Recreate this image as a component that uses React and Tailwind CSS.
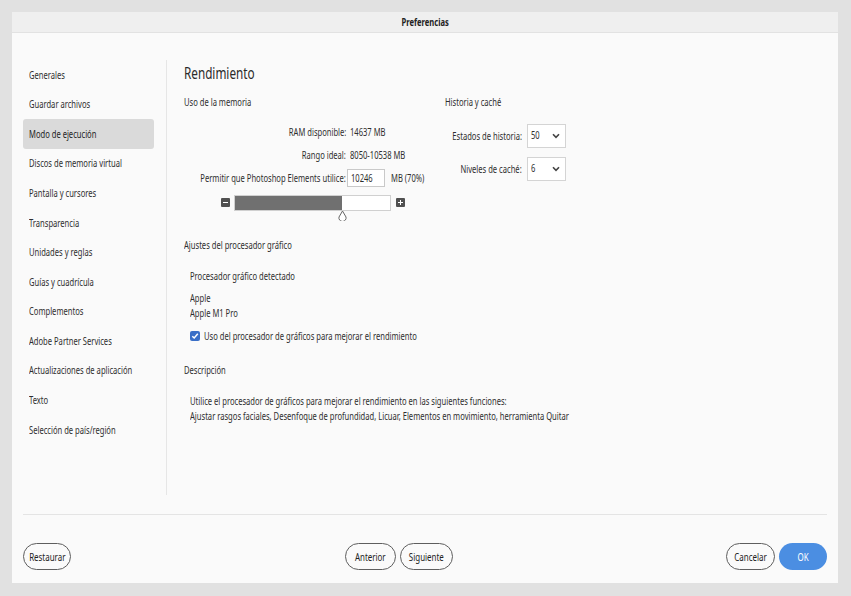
import React from "react";

const F = { fontFamily: '"Noto Sans", "Liberation Sans", sans-serif' };

function T({ children, o = "l", className = "" }) {
  const origin = o === "r" ? "origin-right" : o === "c" ? "origin-center" : "origin-left";
  return (
    <span className={"inline-block shrink-0 whitespace-nowrap scale-x-[0.69] " + origin + " " + className}>
      {children}
    </span>
  );
}

const side = [
  "Generales",
  "Guardar archivos",
  "Modo de ejecución",
  "Discos de memoria virtual",
  "Pantalla y cursores",
  "Transparencia",
  "Unidades y reglas",
  "Guías y cuadrícula",
  "Complementos",
  "Adobe Partner Services",
  "Actualizaciones de aplicación",
  "Texto",
  "Selección de país/región",
];

function Btn({ children, w, primary }) {
  return (
    <div
      className={
        "h-[27px] rounded-full flex items-center justify-center text-[11.5px] " +
        (primary
          ? "bg-[#4b8ee2] text-white"
          : "border-[1.5px] border-[#5e5e5e] text-[#222] bg-[#fafafa]")
      }
      style={{ width: w }}
    >
      <T o="c">{children}</T>
    </div>
  );
}

function Sel({ v }) {
  return (
    <div className="w-[39px] h-[24px] border border-[#d4d4d4] bg-white flex items-start justify-between pl-[3px] pr-[5px] pt-[2px] text-[11px]">
      <T>{v}</T>
      <svg width="8" height="6" viewBox="0 0 8 6" className="mt-[6px]">
        <path d="M1 1.2 L4 4.3 L7 1.2" stroke="#444" strokeWidth="1.6" fill="none" />
      </svg>
    </div>
  );
}

function Label({ w, children }) {
  return (
    <div className="flex justify-end" style={{ width: w }}>
      <T o="r">{children}</T>
    </div>
  );
}

export default function App() {
  return (
    <div
      className="w-[851px] h-[596px] bg-[#e1e1e1] pt-[12px] px-[12px] pb-[13px] text-[#2e2e2e]"
      style={F}
    >
      <div className="w-[826px] h-[571px] bg-[#fafafa] flex flex-col overflow-hidden">
        <div className="h-[21px] shrink-0 bg-[#efefef] border-b border-[#e2e2e2] flex items-center justify-center text-[11px] font-bold text-[#222]">
          <T o="c">Preferencias</T>
        </div>
        <div className="flex h-[481px] shrink-0">
          <div className="w-[143px] ml-[11px] pt-[27px] flex flex-col">
            {side.map((s, i) => (
              <div
                key={s}
                className={
                  "h-[29.6px] shrink-0 flex items-center pl-[6px] text-[11px] rounded-[3px] w-[131px] " +
                  (i === 2 ? "bg-[#dadada] text-[#222]" : "text-[#2e2e2e]")
                }
              >
                <T>{s}</T>
              </div>
            ))}
          </div>
          <div className="w-px h-[435px] mt-[27px] bg-[#e6e6e6] shrink-0" />
          <div className="flex-1 pl-[17px] pt-[29px] text-[11px]">
            <div className="text-[17px] leading-[22px] text-[#2a2a2a]">
              <T>Rendimiento</T>
            </div>
            <div className="flex mt-[11px]">
              <div className="w-[261px]">
                <div className="leading-[14px]">
                  <T>Uso de la memoria</T>
                </div>
                <div className="mt-[11px] grid grid-cols-[162px_1fr] items-center gap-x-[4px]">
                  <div className="flex justify-end h-[23px] leading-[23px]">
                    <T o="r">RAM disponible:</T>
                  </div>
                  <div className="h-[23px] leading-[23px]">
                    <T>14637 MB</T>
                  </div>
                  <div className="flex justify-end h-[23px] leading-[23px]">
                    <T o="r">Rango ideal:</T>
                  </div>
                  <div className="h-[23px] leading-[23px]">
                    <T>8050-10538 MB</T>
                  </div>
                  <div className="flex justify-end h-[24px] leading-[24px]">
                    <T o="r">Permitir que Photoshop Elements utilice:</T>
                  </div>
                  <div className="flex items-center whitespace-nowrap ml-[-3px]">
                    <div className="w-[38px] h-[18px] border border-[#c9c9c9] bg-white leading-[16px] pl-[3px]">
                      <T>10246</T>
                    </div>
                    <div className="ml-[6px]">
                      <T>MB (70%)</T>
                    </div>
                  </div>
                </div>
                <div className="flex items-start ml-[37px] mt-[5px]">
                  <div className="w-[9px] h-[9px] bg-[#505050] rounded-[1px] flex items-center justify-center mt-[3px]">
                    <div className="w-[5px] h-[1.5px] bg-white" />
                  </div>
                  <div className="relative ml-[4px] w-[157px] h-[16px] border border-[#d0d0d0] bg-white">
                    <div className="h-full w-[107px] bg-[#707070]" />
                    <svg
                      width="9"
                      height="11"
                      viewBox="0 0 9 11"
                      className="absolute left-[103px] top-[14px]"
                    >
                      <path d="M4.5 1 L8 7 A3.6 3.6 0 1 1 1 7 Z" fill="#fff" stroke="#666" strokeWidth="1" />
                    </svg>
                  </div>
                  <div className="w-[9px] h-[9px] bg-[#505050] rounded-[1px] flex items-center justify-center mt-[3px] ml-[5px] relative">
                    <div className="w-[5px] h-[1.5px] bg-white" />
                    <div className="absolute w-[1.5px] h-[5px] bg-white" />
                  </div>
                </div>
              </div>
              <div>
                <div className="leading-[14px]">
                  <T>Historia y caché</T>
                </div>
                <div className="mt-[15px] flex flex-col gap-[9px]">
                  <div className="flex items-center">
                    <Label w="77px">Estados de historia:</Label>
                    <div className="ml-[5px]">
                      <Sel v="50" />
                    </div>
                  </div>
                  <div className="flex items-center">
                    <Label w="77px">Niveles de caché:</Label>
                    <div className="ml-[5px]">
                      <Sel v="6" />
                    </div>
                  </div>
                </div>
              </div>
            </div>
            <div className="mt-[27px] leading-[14px]">
              <T>Ajustes del procesador gráfico</T>
            </div>
            <div className="pl-[6px]">
              <div className="mt-[17px] leading-[14px]">
                <T>Procesador gráfico detectado</T>
              </div>
              <div className="mt-[7px] leading-[15px]">
                <T>Apple</T>
              </div>
              <div className="leading-[15px]">
                <T>Apple M1 Pro</T>
              </div>
              <div className="mt-[8px] flex items-center">
                <div className="w-[10px] h-[10px] shrink-0 rounded-[2px] bg-[#3a6fc7] flex items-center justify-center">
                  <svg width="8" height="8" viewBox="0 0 8 8">
                    <path d="M1.3 4.2 L3.2 6 L6.8 1.8" stroke="#fff" strokeWidth="1.5" fill="none" />
                  </svg>
                </div>
                <div className="ml-[4px]">
                  <T>Uso del procesador de gráficos para mejorar el rendimiento</T>
                </div>
              </div>
            </div>
            <div className="mt-[18px] leading-[14px]">
              <T>Descripción</T>
            </div>
            <div className="pl-[6px] mt-[16px] leading-[15.5px]">
              <div>
                <T>Utilice el procesador de gráficos para mejorar el rendimiento en las siguientes funciones:</T>
              </div>
              <div>
                <T>Ajustar rasgos faciales, Desenfoque de profundidad, Licuar, Elementos en movimiento, herramienta Quitar</T>
              </div>
            </div>
          </div>
        </div>
        <div className="mx-[11px] border-t border-[#e4e4e4]" />
        <div className="flex-1 flex items-end justify-between px-[11px] pb-[13px]">
          <Btn w="48px">Restaurar</Btn>
          <div className="flex gap-[4px]">
            <Btn w="51px">Anterior</Btn>
            <Btn w="53px">Siguiente</Btn>
          </div>
          <div className="flex gap-[4px]">
            <Btn w="49px">Cancelar</Btn>
            <Btn w="48px" primary>
              OK
            </Btn>
          </div>
        </div>
      </div>
    </div>
  );
}
